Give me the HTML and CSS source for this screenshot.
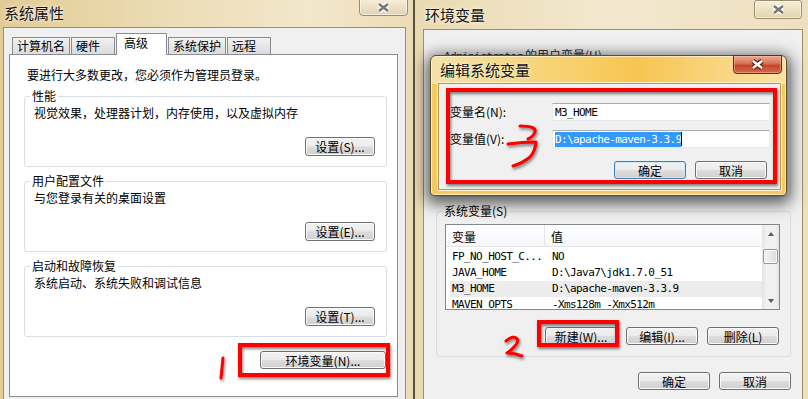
FILE: index.html
```html
<!DOCTYPE html>
<html lang="zh-CN">
<head>
    <meta charset="UTF-8">
    <title>系统属性 - 环境变量</title>
    <link rel="stylesheet" href="styles.css">
</head>
<body>
<div class="desk">

    <!-- 左：系统属性 -->
    <div class="win win-left">
        <div class="titlebar">
            <span class="title">系统属性</span>
            <span class="close">
                <svg width="15" height="11" viewBox="0 0 15 11"><path d="M3 2L12 9M12 2L3 9" stroke="#fdfdfd" stroke-width="5"/><path d="M3 2L12 9M12 2L3 9" stroke="#767676" stroke-width="2.4"/></svg>
            </span>
        </div>
        <div class="client">
            <ul class="tabs">
                <li>计算机名</li>
                <li>硬件</li>
                <li class="active">高级</li>
                <li>系统保护</li>
                <li>远程</li>
            </ul>
            <div class="panel">
                <p class="intro">要进行大多数更改，您必须作为管理员登录。</p>
                <fieldset class="group">
                    <legend>性能</legend>
                    <p>视觉效果，处理器计划，内存使用，以及虚拟内存</p>
                    <div class="btn-row"><button class="btn btn-set">设置(S)...</button></div>
                </fieldset>
                <fieldset class="group">
                    <legend>用户配置文件</legend>
                    <p>与您登录有关的桌面设置</p>
                    <div class="btn-row"><button class="btn btn-set">设置(E)...</button></div>
                </fieldset>
                <fieldset class="group">
                    <legend>启动和故障恢复</legend>
                    <p>系统启动、系统失败和调试信息</p>
                    <div class="btn-row"><button class="btn btn-set">设置(T)...</button></div>
                </fieldset>
                <div class="btn-row env-row"><button class="btn btn-env">环境变量(N)...</button></div>
            </div>
        </div>
    </div>

    <!-- 右：环境变量 -->
    <div class="win win-right">
        <div class="titlebar">
            <span class="title">环境变量</span>
            <span class="close">
                <svg width="15" height="11" viewBox="0 0 15 11"><path d="M3 2L12 9M12 2L3 9" stroke="#fdfdfd" stroke-width="5"/><path d="M3 2L12 9M12 2L3 9" stroke="#767676" stroke-width="2.4"/></svg>
            </span>
        </div>
        <div class="client">
            <fieldset class="group user-group">
                <legend><span class="mono">Administrator</span> 的用户变量(U)</legend>
            </fieldset>
            <fieldset class="group sys-group">
                <legend>系统变量(S)</legend>
                <div class="list">
                    <div class="list-body">
                        <div class="list-head">
                            <span class="col1">变量</span>
                            <span class="col2">值</span>
                        </div>
                        <div class="row first mono"><span class="col1">FP_NO_HOST_C...</span><span class="col2">NO</span></div>
                        <div class="row mono"><span class="col1">JAVA_HOME</span><span class="col2">D:\Java7\jdk1.7.0_51</span></div>
                        <div class="row sel mono"><span class="col1">M3_HOME</span><span class="col2">D:\apache-maven-3.3.9</span></div>
                        <div class="row mono"><span class="col1">MAVEN_OPTS</span><span class="col2">-Xms128m -Xmx512m</span></div>
                    </div>
                    <div class="scroll">
                        <div class="arrow"><i class="up"></i></div>
                        <div class="track"><div class="thumb"></div></div>
                        <div class="arrow"><i class="down"></i></div>
                    </div>
                </div>
                <div class="btn-row list-btns">
                    <button class="btn btn-w">新建(W)...</button>
                    <button class="btn btn-w">编辑(I)...</button>
                    <button class="btn btn-w">删除(L)</button>
                </div>
            </fieldset>
            <div class="btn-row foot">
                <button class="btn btn-w">确定</button>
                <button class="btn btn-w">取消</button>
            </div>
        </div>
    </div>

    <!-- 编辑系统变量 对话框 -->
    <div class="dialog">
        <div class="dlg-title">
            <span class="title">编辑系统变量</span>
            <span class="dlg-close">
                <svg width="15" height="11" viewBox="0 0 15 11"><path d="M3 2L12 9M12 2L3 9" stroke="#5a1d12" stroke-width="5"/><path d="M3 2L12 9M12 2L3 9" stroke="#fff" stroke-width="2.6"/></svg>
            </span>
        </div>
        <div class="dlg-client">
            <div class="field">
                <label>变量名(N):</label>
                <div class="input mono">M3_HOME</div>
            </div>
            <div class="field">
                <label>变量值(V):</label>
                <div class="input mono"><span class="hl">D:\apache-maven-3.3.9</span><span class="caret"></span></div>
            </div>
            <div class="btn-row dlg-btns">
                <button class="btn btn-w btn-default">确定</button>
                <button class="btn btn-w">取消</button>
            </div>
        </div>
    </div>

    <!-- 标注 -->
    <svg class="marks" width="808" height="399" viewBox="0 0 808 399">
        <defs>
            <filter id="sh" x="-20%" y="-20%" width="140%" height="140%">
                <feDropShadow dx="1" dy="2" stdDeviation="1.5" flood-color="#000" flood-opacity="0.5"/>
            </filter>
        </defs>
        <g fill="none" stroke="#ff0000" filter="url(#sh)">
            <rect x="240" y="345" width="148" height="30" stroke-width="4"/>
            <rect x="448" y="90" width="327" height="92" stroke-width="4"/>
            <rect x="539" y="322" width="78" height="23" stroke-width="4"/>
            <path d="M223 358Q222 368 221 378" stroke-width="3" stroke-linecap="round"/>
            <path d="M506 341Q514 334 518 340Q517 346 507 353Q515 353 522 356" stroke-width="3" stroke-linecap="round" stroke-linejoin="round"/>
            <path d="M520 126Q537 126 535 132Q533 137 528 139M508 144Q522 142 536 142Q535 152 530 157Q523 163 513 166" stroke-width="3" stroke-linecap="round" stroke-linejoin="round"/>
        </g>
    </svg>

</div>
</body>
</html>
```

FILE: styles.css
```css
*{
    margin: 0;
    padding: 0;
    box-sizing: border-box;
}
body{
    width: 808px;
    height: 399px;
    overflow: hidden;
    font: 12px/14px "Noto Sans CJK SC", sans-serif;
    color: #000;
    background: #5b5140;
}
.desk{
    position: relative;
    display: flex;
    gap: 2px;
    height: 399px;
    overflow: hidden;
}
.mono{
    font-family: "DejaVu Sans Mono", "Liberation Mono", monospace;
    font-size: 11px;
    letter-spacing: -0.6px;
}

/* 窗口框架 */
.win{
    display: flex;
    flex-direction: column;
    height: 412px;
    flex-shrink: 0;
}
.win-left{
    width: 413px;
    padding: 0 7px 0 3px;
    background: linear-gradient(90deg, #e2cb95, #ecdcb5 40%, #f3e7cb 75%, #ecdcb6);
}
.win-right{
    flex: 1;
    padding: 0 5px 0 8px;
    background: linear-gradient(90deg, #eadab3, #f3e8cf 50%, #eee0bf);
}
.titlebar{
    display: flex;
    align-items: flex-start;
    height: 27px;
}
.win-right .titlebar{
    height: 29px;
}
.title{
    font-size: 15px;
    line-height: 18px;
    padding: 4px 0 0 1px;
    color: #111;
    text-shadow: 0 0 4px #fff7e2, 0 0 2px #fff7e2;
}
.win-right .title{
    padding: 6px 0 0 2px;
}
.close{
    display: flex;
    align-items: center;
    justify-content: center;
    width: 49px;
    height: 18px;
    margin: -2px -2px 0 auto;
    border: 1px solid #9b8d6d;
    border-radius: 0 0 4px 4px;
    background: linear-gradient(#f7efdc, #ede1c4 50%, #e3d4ae);
    box-shadow: inset 0 0 0 1px rgba(255,255,255,0.55);
}
.win-right .close{
    width: 48px;
    height: 19px;
    margin: 0 1px 0 auto;
    border-radius: 3px;
}
.client{
    flex: 1;
    background: #f0f0f0;
    border: 1px solid #9c8f70;
}

/* 选项卡 */
.tabs{
    display: flex;
    align-items: flex-end;
    list-style: none;
    height: 26px;
    padding-left: 8px;
}
.tabs li{
    height: 17px;
    min-width: 44px;
    padding: 0 4px;
    margin-right: 1px;
    border: 1px solid #898c95;
    border-bottom: none;
    background: linear-gradient(#f3f3f3, #e6e6e6 50%, #dcdcdc);
    line-height: 16px;
}
.tabs .active{
    position: relative;
    z-index: 1;
    height: 22px;
    min-width: 51px;
    margin-bottom: -1px;
    padding-left: 7px;
    background: #fff;
    line-height: 18px;
}
.panel{
    height: 343px;
    margin: 0 7px 0 5px;
    padding: 13px 10px 0 14px;
    background: #fff;
    border: 1px solid #898c95;
}
.intro{
    padding-left: 3px;
    margin-bottom: 1px;
}

/* 分组框 */
.group{
    min-width: 0;
    margin-top: 7px;
    padding: 3px 11px 10px 9px;
    border: 1px solid #d5dfe5;
    border-radius: 3px;
}
.group legend{
    margin-left: -4px;
    padding: 0 2px;
    line-height: 14px;
}
.btn-row{
    display: flex;
    justify-content: flex-end;
    gap: 9px;
}
.group .btn-row{
    margin-top: 17px;
}
.env-row{
    margin: 14px 1px 0 0;
}

/* 按钮 */
.btn{
    font: inherit;
    width: 72px;
    height: 18px;
    padding: 0;
    line-height: 15px;
    color: #000;
    text-align: center;
    border: 1px solid #707070;
    border-radius: 3px;
    background: linear-gradient(#f2f2f2, #ebebeb 48%, #dddddd 52%, #cfcfcf);
    box-shadow: inset 0 0 0 1px #fbfbfb;
}
.btn-set{
    width: 70px;
    height: 19px;
    line-height: 16px;
}
.btn-env{
    width: 126px;
}
.btn-default{
    border-color: #3c7fb1;
    box-shadow: inset 0 0 0 1px #c9ecfc;
}

/* 环境变量窗口 */
.win-right .client{
    padding: 18px 11px 0 12px;
}
.user-group{
    height: 149px;
    margin-top: 0;
}
.user-group legend{
    color: #2a2a2a;
}
.sys-group{
    padding: 6px 10px 11px 8px;
}
.sys-group legend{
    margin-left: -3px;
}
.list{
    display: flex;
    height: 86px;
    border: 1px solid #828790;
    background: #fff;
}
.list-body{
    flex: 1;
    overflow: hidden;
}
.list-head{
    display: flex;
    height: 22px;
    border-bottom: 1px solid #e5e5e5;
    background: linear-gradient(#fff, #f6f7f9);
}
.list-head span{
    padding-top: 5px;
}
.col1{
    width: 99px;
    padding-left: 6px;
    white-space: nowrap;
}
.list-head .col1{
    border-right: 1px solid #e5e5e5;
}
.col2{
    padding-left: 7px;
    white-space: nowrap;
}
.list-head .col2{
    padding-left: 6px;
}
.row{
    display: flex;
    height: 16px;
    line-height: 16px;
}
.row.first{
    margin-top: 2px;
}
.row.sel{
    background: linear-gradient(90deg, transparent 4px, #ececec 4px);
}
.scroll{
    display: flex;
    flex-direction: column;
    width: 17px;
    background: linear-gradient(90deg, #e3e3e3, #f1f1f1 25%, #f1f1f1 75%, #e6e6e6);
}
.arrow{
    display: flex;
    align-items: center;
    justify-content: center;
    height: 17px;
}
.arrow i{
    width: 0;
    height: 0;
    border-left: 3.5px solid transparent;
    border-right: 3.5px solid transparent;
}
.arrow .up{
    border-bottom: 4px solid #5a5a5a;
}
.arrow .down{
    border-top: 4px solid #5a5a5a;
}
.track{
    flex: 1;
}
.thumb{
    height: 15px;
    margin: 7px 1px 0;
    border: 1px solid #979797;
    border-radius: 2px;
    background: linear-gradient(90deg, #f5f5f5, #e9e9e9 50%, #dcdcdc);
    box-shadow: inset 0 0 0 1px #fbfbfb;
}
.list-btns{
    margin: 13px 1px 0 0;
}
.foot{
    margin-top: 15px;
}

/* 编辑系统变量 */
.dialog{
    position: absolute;
    left: 430px;
    top: 55px;
    width: 357px;
    height: 141px;
    display: flex;
    flex-direction: column;
    padding: 0 5px 5px 7px;
    border: 1px solid #5e4d2b;
    border-radius: 6px 6px 4px 4px;
    background: linear-gradient(90deg, #f4e1ab, #f8cf68 42%, #f6c552 58%, #fbe3a4) top / 100% 28px no-repeat, #f3c961;
    box-shadow: 0 4px 15px 4px rgba(0,0,0,0.62), inset 0 0 0 1px rgba(255,248,225,0.7);
}
.dlg-title{
    display: flex;
    align-items: flex-start;
    height: 27px;
}
.dlg-title .title{
    padding: 5px 0 0 2px;
    text-shadow: 0 0 4px #fff3cc, 0 0 2px #fff3cc;
}
.dlg-close{
    display: flex;
    align-items: center;
    justify-content: center;
    width: 49px;
    height: 19px;
    margin: -1px -1px 0 auto;
    border: 1px solid #6d2816;
    border-radius: 0 0 4px 4px;
    background: linear-gradient(#eba996, #d9704f 45%, #c3462a 55%, #d36c4c);
    box-shadow: inset 0 0 0 1px rgba(255,200,180,0.45);
}
.dlg-client{
    flex: 1;
    padding: 19px 10px 0 11px;
    background: #f0f0f0;
    border: 1px solid #b8994f;
    box-shadow: 0 0 0 1px #fff2c8;
}
.field{
    display: flex;
    align-items: center;
    height: 18px;
}
.field + .field{
    margin-top: 9px;
}
.field label{
    width: 102px;
}
.input{
    display: flex;
    align-items: center;
    width: 218px;
    height: 18px;
    padding: 0 2px;
    background: #fff;
    border: 1px solid #e3e9ef;
    border-top-color: #abadb3;
    line-height: 15px;
}
.hl{
    background: #3399ff;
    color: #fff;
}
.caret{
    width: 1px;
    height: 14px;
    background: #000;
}
.dlg-btns{
    margin: 13px 3px 0 0;
}

/* 红色标注 */
.marks{
    position: absolute;
    left: 0;
    top: 0;
    pointer-events: none;
}
```
